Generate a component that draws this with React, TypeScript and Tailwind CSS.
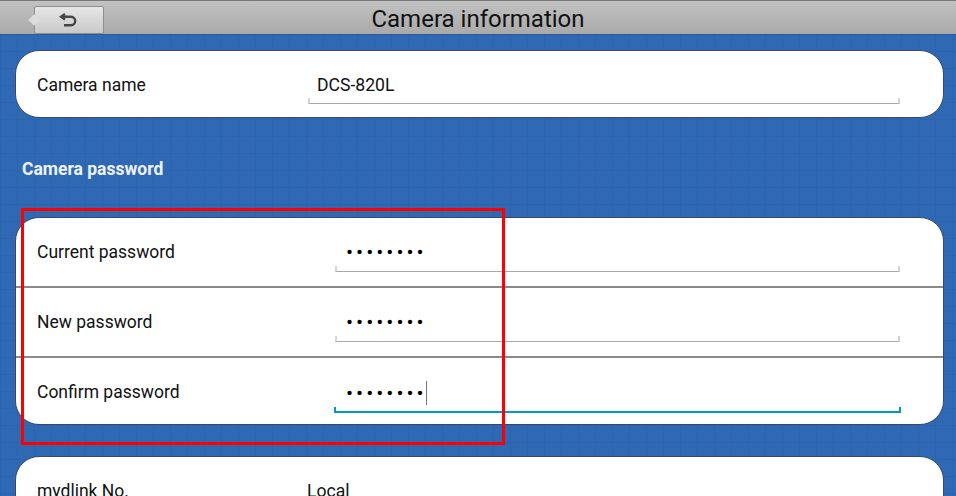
import React from 'react';

const Field: React.FC<{ children: React.ReactNode; active?: boolean; className?: string }> = ({ children, active, className }) => (
  <div className={`relative h-[38px] flex items-center ${className ?? ''}`}>
    {children}
    <div className={`absolute -bottom-px h-[6px] ${active ? '-left-px -right-px border-x-2 border-b-2 border-[#0099cc]' : 'left-0 right-0 border-x-2 border-b border-[#a8a8a8] border-x-[#d4d4d4]'}`} />
  </div>
);

const Dots: React.FC = () => (
  <span className="text-[21px] leading-none text-black tracking-[3px] pl-[11px]">••••••••</span>
);

const PasswordRow: React.FC<{ label: string; active?: boolean; last?: boolean }> = ({ label, active, last }) => (
  <div className={`h-[70px] flex items-center pl-[21px] pr-[43px] ${last ? '' : 'border-b-2 border-[#8a8a8a]'}`}>
    <div className={`w-[298px] text-[17.5px] text-[#111] ${last ? '-mt-[2px]' : ''}`}>{label}</div>
    <Field active={active} className="flex-1">
      <Dots />
      {active && <div className="w-px h-[24px] bg-[#777] -ml-[1px]" />}
    </Field>
  </div>
);

export default function App() {
  return (
    <div
      className="w-[956px] h-[496px] overflow-hidden relative bg-[#3069b3] bg-[linear-gradient(to_right,#2c65ae_1px,transparent_1px),linear-gradient(to_bottom,#2c65ae_1px,transparent_1px)] bg-[size:17px_17px]"
      style={{ fontFamily: 'Roboto, sans-serif' }}
    >
      <header className="h-[35px] relative flex items-center justify-center pt-[3px] bg-gradient-to-b from-[#c2c2c2] to-[#a9a9a9] border-t border-t-[#777] border-b border-b-[#2a5a99]">
        <span className="text-[24px] text-[#111] leading-none">Camera information</span>
        <button className="absolute left-[30px] top-[5px] flex items-center">
          <span className="w-[8px] h-[8px] bg-[#dcdcdc] rotate-45 -mr-[4px]" />
          <span className="w-[70px] h-[28px] rounded-[2px] border border-[#8f8f8f] bg-gradient-to-b from-[#e6e6e6] to-[#c9c9c9] flex items-center justify-center">
            <svg width="18" height="14" viewBox="0 0 18 14" fill="none" stroke="#444" strokeWidth="2.4" className="-ml-[2px]">
              <path d="M6 1 L2 3.8 L6 6.6" />
              <path d="M2.5 3.8 H12 a4 4 0 0 1 0 8.4 H5" />
            </svg>
          </span>
        </button>
      </header>

      <div className="pl-[15px] pr-[12px] pt-[15px] flex flex-col">
        <section className="h-[68px] rounded-[24px] bg-white border border-[#34496b] flex items-center pl-[21px] pr-[43px]">
          <div className="w-[271px] mt-[2px] text-[17.5px] text-[#111]">Camera name</div>
          <Field className="flex-1">
            <span className="pl-[9px] mt-[2px] text-[17.6px] text-[#111]">DCS-820L</span>
          </Field>
        </section>

        <h2 className="mt-[42px] pl-[7px] text-[17.5px] leading-[19px] font-bold text-[#eef3fa]">Camera password</h2>

        <section className="mt-[38px] h-[208px] rounded-[24px] bg-white border border-[#34496b] overflow-hidden">
          <PasswordRow label="Current password" />
          <PasswordRow label="New password" />
          <PasswordRow label="Confirm password" active last />
        </section>

        <section className="mt-[31px] h-[69px] rounded-[24px] bg-white border border-[#34496b] flex pl-[21px] pt-[21px]">
          <div className="w-[270px] text-[17.5px] text-[#111]">mydlink No.</div>
          <div className="text-[17.6px] text-[#111]">Local</div>
        </section>
      </div>

      <div className="absolute left-[21px] top-[208px] w-[484px] h-[237px] border-[3px] border-[#ff0000]" />
    </div>
  );
}
